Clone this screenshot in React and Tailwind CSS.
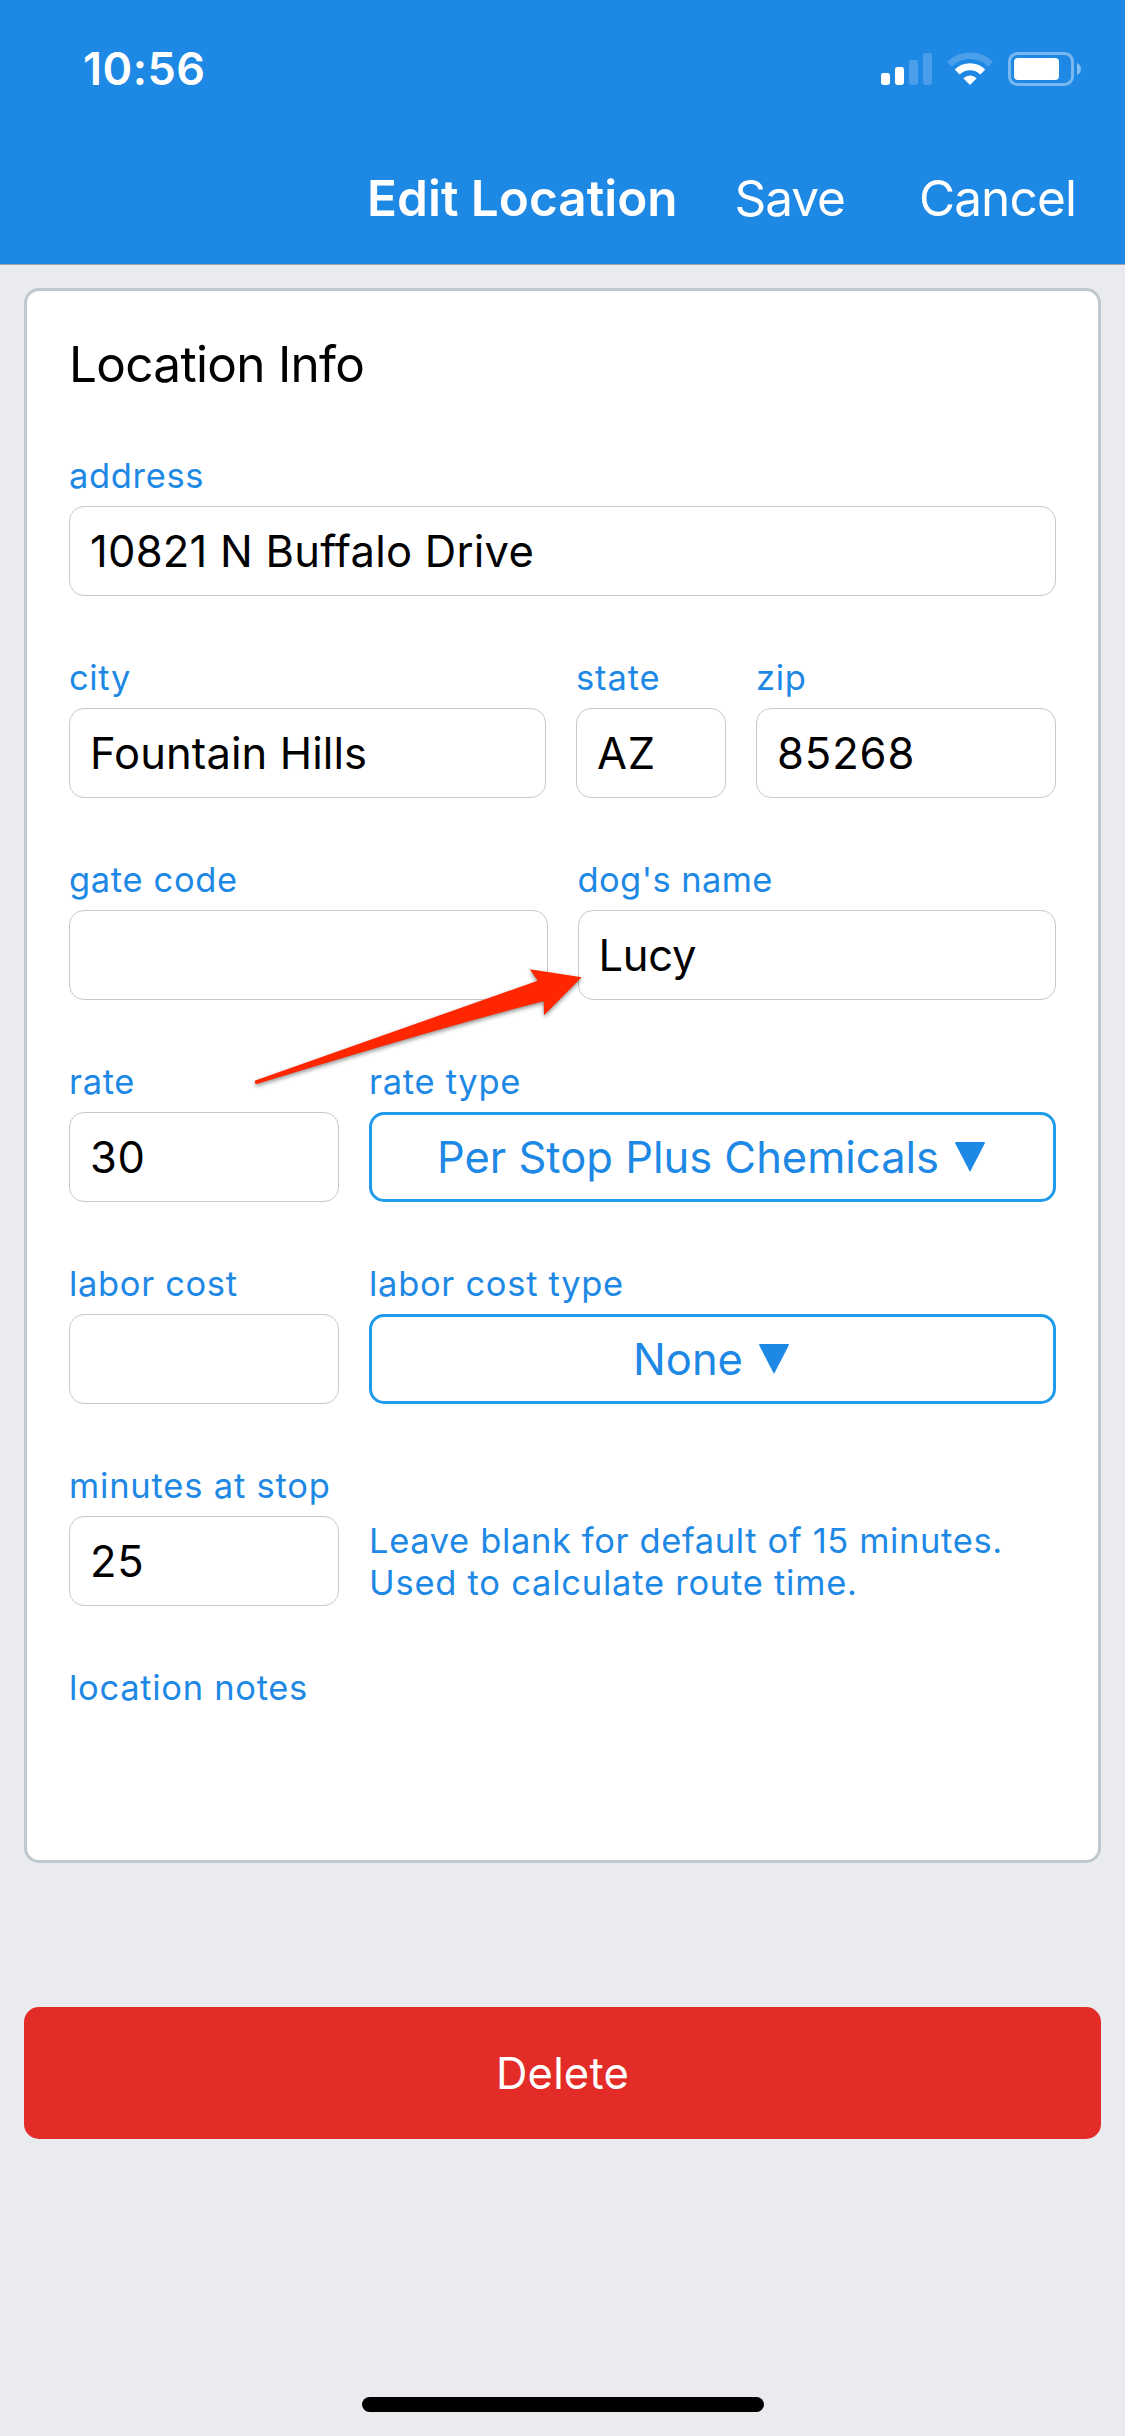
import React from "react";

function SignalIcon() {
  return (
    <svg width="51" height="34" viewBox="0 0 51 34" fill="#fff">
      <rect x="0" y="21" width="9" height="12" rx="2.4" />
      <rect x="14" y="15" width="9" height="18" rx="2.4" />
      <rect x="28" y="8" width="9" height="25" rx="2.4" opacity="0.2" />
      <rect x="42" y="1" width="9" height="32" rx="2.4" opacity="0.2" />
    </svg>
  );
}

function WifiIcon() {
  return (
    <svg width="46" height="34" viewBox="0 0 46 34" fill="none" stroke="#fff">
      <path d="M2.4 12.2A29.2 29.2 0 0 1 43.6 12.2" strokeWidth="6.4" opacity="0.2" />
      <path d="M10.2 20A18.2 18.2 0 0 1 35.8 20" strokeWidth="7" />
      <path d="M23 33L16.3 26.2Q23 20.6 29.7 26.2Z" fill="#fff" stroke="none" />
    </svg>
  );
}

function BatteryIcon() {
  return (
    <svg width="73" height="34" viewBox="0 0 73 34">
      <rect x="1.5" y="1.5" width="63" height="31" rx="8" fill="none" stroke="#fff" strokeWidth="3" opacity="0.4" />
      <rect x="6" y="6" width="45" height="22" rx="4" fill="#fff" />
      <path d="M69 11C74.300 13.500 74.300 20.500 69 23Z" fill="#fff" opacity="0.45" />
    </svg>
  );
}

function Label({ children, className = "" }) {
  return (
    <div className={`h-[44px] whitespace-nowrap text-[34.5px] leading-[44px] text-[#1e88e5] ${className}`}>
      {children}
    </div>
  );
}

function Field({ label, value, width, labelClass = "tracking-[0.65px]", valueClass = "tracking-[0.3px]" }) {
  return (
    <div className={`flex flex-col gap-2 ${width}`}>
      <Label className={labelClass}>{label}</Label>
      <div className={`h-[90px] whitespace-nowrap rounded-[15px] border border-[#c9c9c9] bg-white pl-[20px] text-[43.5px] leading-[88px] text-black ${valueClass}`}>
        {value}
      </div>
    </div>
  );
}

function Select({ label, value, labelClass = "tracking-[0.7px]" }) {
  return (
    <div className="flex flex-1 flex-col gap-2">
      <Label className={labelClass}>{label}</Label>
      <button className="flex h-[90px] items-center justify-center gap-[16px] rounded-[15px] border-[3px] border-[#1f9bea] pr-[3px] text-[43.5px] leading-[84px] text-[#1e88e5]">
        <span>{value}</span>
        <svg width="30" height="30" viewBox="0 0 30 30" fill="#1e88e5">
          <path d="M0.600 0H29.400Q30.200 0.400 29.700 1.500L15 30L0.300 1.500Q-0.200 0.400 0.600 0Z" />
        </svg>
      </button>
    </div>
  );
}

export default function App() {
  return (
    <div className="relative h-[2436px] w-[1125px] overflow-hidden bg-[#e9ebee] font-[Inter,sans-serif]">
      <header className="h-[265px] border-b border-[#9aa5b1] bg-[#1e88e5] text-white">
        <div className="flex h-[96px] items-start justify-between pt-[42px] pr-[44px] pl-[83px]">
          <div className="text-[45px] leading-[54px] font-semibold tracking-[0.5px]">10:56</div>
          <div className="flex pt-[10px]">
            <SignalIcon />
            <div className="ml-[15px]"><WifiIcon /></div>
            <div className="ml-[15px]"><BatteryIcon /></div>
          </div>
        </div>
        <div className="flex justify-end pt-[72px] pr-[49px] text-[49.5px] leading-[60px]">
          <h1 className="font-semibold">Edit Location</h1>
          <button className="ml-[57px] tracking-[-1.06px]">Save</button>
          <button className="ml-[74px] tracking-[-0.87px]">Cancel</button>
        </div>
      </header>

      <main className="px-[24px] pt-[23px]">
        <section className="flex h-[1575px] flex-col gap-[60px] rounded-[15px] border-[3px] border-[#bdc9cf] bg-white px-[42px] pt-[43px]">
          <h2 className="text-[49.5px] leading-[60px] tracking-[-0.7px] text-black">Location Info</h2>

          <Field label="address" value="10821 N Buffalo Drive" width="w-full" valueClass="tracking-[0.25px]" />

          <div className="flex gap-[30px]">
            <Field label="city" value="Fountain Hills" width="w-[477px]" valueClass="tracking-[0.1px]" />
            <Field label="state" value="AZ" width="w-[150px]" valueClass="tracking-[0.7px]" labelClass="tracking-[0.9px]" />
            <Field label="zip" value="85268" width="flex-1" valueClass="tracking-[0.9px]" />
          </div>

          <div className="flex gap-[30px]">
            <Field label="gate code" value="" width="flex-1" />
            <Field label="dog's name" value="Lucy" width="flex-1" valueClass="tracking-[-0.3px]" labelClass="tracking-[0.4px]" />
          </div>

          <div className="flex gap-[30px]">
            <Field label="rate" value="30" width="w-[270px]" valueClass="tracking-[0.6px]" />
            <Select label="rate type" value="Per Stop Plus Chemicals" />
          </div>

          <div className="flex gap-[30px]">
            <Field label="labor cost" value="" width="w-[270px]" />
            <Select label="labor cost type" value="None" />
          </div>

          <div className="flex items-end gap-[30px]">
            <Field label="minutes at stop" value="25" width="w-[270px]" valueClass="tracking-[0.6px]" labelClass="tracking-[0.8px]" />
            <p className="mb-[2px] text-[34.5px] leading-[42px] whitespace-nowrap text-[#1e88e5]">
              <span className="block tracking-[0.630px]">Leave blank for default of 15 minutes.</span>
              <span className="block tracking-[0.760px]">Used to calculate route time.</span>
            </p>
          </div>

          <Label className="tracking-[0.7px]">location notes</Label>
        </section>

        <button className="mt-[144px] block h-[132px] w-full rounded-[15px] bg-[#e32b28] text-center text-[43.5px] leading-[132px] tracking-[0.2px] text-white">
          Delete
        </button>
      </main>

      <div className="mx-auto mt-[258px] h-[15px] w-[402px] rounded-full bg-black" />

      {/* Annotation arrow pointing at the dog's name field */}
      <svg className="absolute top-[940px] left-[240px] drop-shadow-[0_2px_2px_rgba(0,0,0,0.45)]" width="370" height="160" viewBox="0 0 370 160">
        <path d="M15.300 140.500L297.700 40.700L289.700 29.300L341.700 37.300L304 75.300L303.700 61.300Q205 86 16 144.200Q14 142.500 15.300 140.500Z" fill="#ff2600" />
      </svg>
    </div>
  );
}
